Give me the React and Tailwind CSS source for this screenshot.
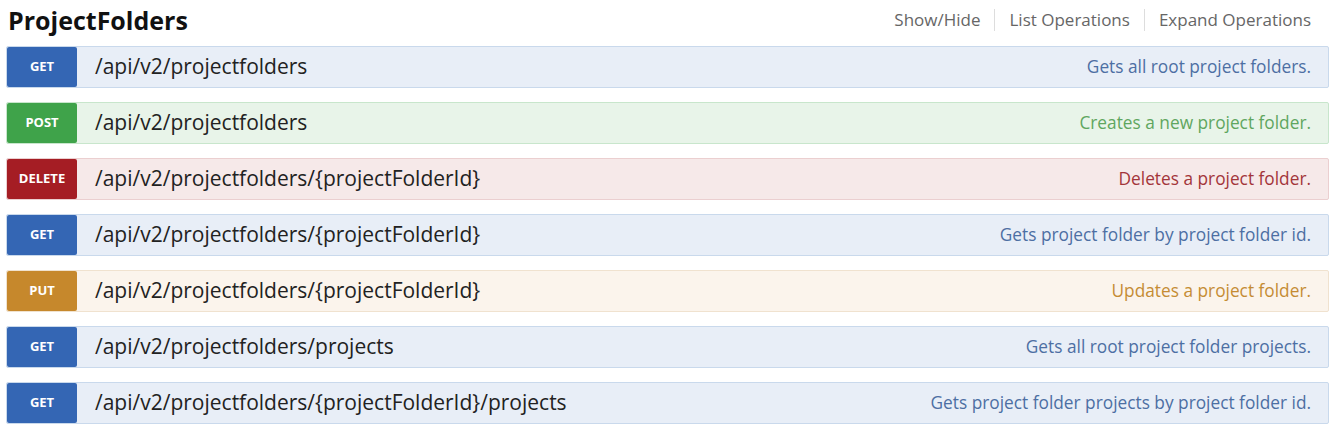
import React from "react";

const ops = [
  { method: "GET", path: "/api/v2/projectfolders", desc: "Gets all root project folders." },
  { method: "POST", path: "/api/v2/projectfolders", desc: "Creates a new project folder." },
  { method: "DELETE", path: "/api/v2/projectfolders/{projectFolderId}", desc: "Deletes a project folder." },
  { method: "GET", path: "/api/v2/projectfolders/{projectFolderId}", desc: "Gets project folder by project folder id." },
  { method: "PUT", path: "/api/v2/projectfolders/{projectFolderId}", desc: "Updates a project folder." },
  { method: "GET", path: "/api/v2/projectfolders/projects", desc: "Gets all root project folder projects." },
  { method: "GET", path: "/api/v2/projectfolders/{projectFolderId}/projects", desc: "Gets project folder projects by project folder id." },
];

const styles = {
  GET: {
    row: "bg-[#e8eef7] border-[#c9d9ec]",
    badge: "bg-[#3466b4]",
    desc: "text-[#4d6fa3]",
  },
  POST: {
    row: "bg-[#e8f4e9] border-[#c8e6cc]",
    badge: "bg-[#3fa34a]",
    desc: "text-[#5fa65f]",
  },
  DELETE: {
    row: "bg-[#f6e9e9] border-[#ebcfd0]",
    badge: "bg-[#a51d24]",
    desc: "text-[#a3353a]",
  },
  PUT: {
    row: "bg-[#fbf4ec] border-[#f0e2cf]",
    badge: "bg-[#c6882c]",
    desc: "text-[#c58c34]",
  },
};

function OpRow({ op }) {
  const s = styles[op.method];
  return (
    <div className={"flex items-center h-[42px] border rounded-[2px] " + s.row}>
      <div
        className={
          "w-[70px] h-[40px] flex items-center justify-center rounded-[2px] text-white text-[13px] font-bold " +
          s.badge
        }
      >
        {op.method}
      </div>
      <div className="ml-[18px] text-[21px] text-[#222]">{op.path}</div>
      <div className={"ml-auto pr-[17px] text-[17.3px] " + s.desc}>{op.desc}</div>
    </div>
  );
}

export default function App() {
  return (
    <div className="w-[1338px] h-[434px] bg-white pl-[6px] pr-[9px] font-['Open_Sans',sans-serif]">
      <div className="flex items-center justify-between h-[40px]">
        <h1 className="ml-[2px] text-[25px] leading-none font-bold text-[#111]">ProjectFolders</h1>
        <div className="flex items-center mr-[18px] text-[17px] text-[#666]">
          <span>Show/Hide</span>
          <span className="mx-[14px] w-px h-[22px] bg-[#ddd]" />
          <span>List Operations</span>
          <span className="mx-[14px] w-px h-[22px] bg-[#ddd]" />
          <span>Expand Operations</span>
        </div>
      </div>
      <div className="mt-[6px] flex flex-col gap-[14px]">
        {ops.map((op, i) => (
          <OpRow key={i} op={op} />
        ))}
      </div>
    </div>
  );
}
